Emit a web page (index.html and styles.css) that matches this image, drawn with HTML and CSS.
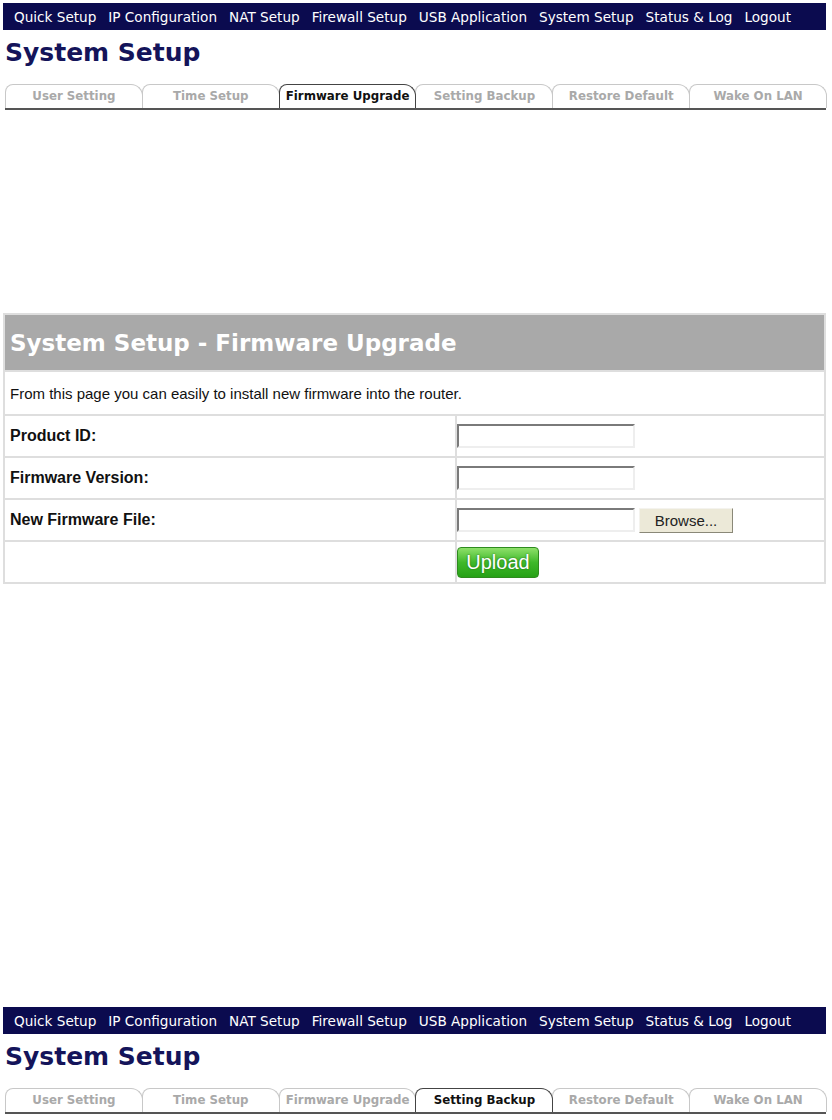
FILE: index.html
```html
<!DOCTYPE html>
<html lang="en">
<head>
    <meta charset="UTF-8">
    <title>System Setup - Firmware Upgrade</title>
    <link rel="stylesheet" href="styles.css">
</head>
<body>
    <div class="shot">
        <nav class="topnav">
            <a href="#">Quick Setup</a>
            <a href="#">IP Configuration</a>
            <a href="#">NAT Setup</a>
            <a href="#">Firewall Setup</a>
            <a href="#">USB Application</a>
            <a href="#">System Setup</a>
            <a href="#">Status &amp; Log</a>
            <a href="#">Logout</a>
        </nav>
        <h1 class="page-title">System Setup</h1>
        <ul class="tabs">
            <li>User Setting</li>
            <li>Time Setup</li>
            <li class="active">Firmware Upgrade</li>
            <li>Setting Backup</li>
            <li>Restore Default</li>
            <li>Wake On LAN</li>
        </ul>
    </div>

    <table class="panel">
        <tr>
            <th colspan="2" class="panel-head">System Setup - Firmware Upgrade</th>
        </tr>
        <tr>
            <td colspan="2" class="desc">From this page you can easily to install new firmware into the router.</td>
        </tr>
        <tr>
            <td class="label">Product ID:</td>
            <td class="field"><input type="text" class="text-box"></td>
        </tr>
        <tr>
            <td class="label">Firmware Version:</td>
            <td class="field"><input type="text" class="text-box"></td>
        </tr>
        <tr>
            <td class="label">New Firmware File:</td>
            <td class="field"><input type="text" class="text-box"><button class="browse">Browse...</button></td>
        </tr>
        <tr>
            <td class="label"></td>
            <td class="field"><button class="upload">Upload</button></td>
        </tr>
    </table>

    <div class="shot second">
        <nav class="topnav">
            <a href="#">Quick Setup</a>
            <a href="#">IP Configuration</a>
            <a href="#">NAT Setup</a>
            <a href="#">Firewall Setup</a>
            <a href="#">USB Application</a>
            <a href="#">System Setup</a>
            <a href="#">Status &amp; Log</a>
            <a href="#">Logout</a>
        </nav>
        <h1 class="page-title">System Setup</h1>
        <ul class="tabs">
            <li>User Setting</li>
            <li>Time Setup</li>
            <li>Firmware Upgrade</li>
            <li class="active">Setting Backup</li>
            <li>Restore Default</li>
            <li>Wake On LAN</li>
        </ul>
    </div>
</body>
</html>
```

FILE: styles.css
```css
:root {
    --navy: #0b0b4f; --title: #14145a; --tab-line: #c8c8c8; --tab-text: #a9a9a9;
    --grid: #dedede; --head-bg: #a9a9a9;
}
body { margin: 0; padding: 3px 6px 0 3px; background: #fff; font-family: 'DejaVu Sans', Verdana, sans-serif; }
.shot { width: 823px; }
.second { margin-top: 423px; }
.topnav { background: var(--navy); height: 27px; display: flex; align-items: center; gap: 12px; padding-left: 11px; }
.topnav a { color: #fff; text-decoration: none; font-size: 13.6px; }
.page-title { margin: 6px 0 0 2px; font-size: 25px; font-weight: bold; color: var(--title); line-height: 34px; }
.tabs { list-style: none; margin: 14px 0 0 2px; padding: 0; display: flex; border-bottom: 2px solid #555; }
.tabs li { flex: 1; height: 23px; line-height: 23px; text-align: center; font-size: 11.8px; font-weight: bold; color: var(--tab-text);
    border: 1px solid var(--tab-line); border-bottom: none; border-radius: 8px 12px 0 0; margin-right: -1px; }
.tabs li.active { color: #111; border-color: #444; position: relative; z-index: 1; }

.panel { margin-top: 203px; width: 823px; border-collapse: separate; border-spacing: 2px; background: var(--grid); font-family: 'Liberation Sans', Arial, sans-serif; }
.panel td { background: #fff; height: 40px; padding: 0; }
.panel-head { background: var(--head-bg); color: #fff; text-align: left; height: 55px; padding: 0 0 0 5px; font-family: 'DejaVu Sans', Verdana, sans-serif; font-size: 23px; font-weight: bold; }
.panel .desc { height: 42px; padding-left: 5px; font-size: 15px; color: #111; }
.panel .label { width: 445px; padding-left: 5px; font-size: 16px; font-weight: bold; color: #111; }
.panel .field { padding-left: 0; }
.text-box { width: 172px; height: 18px; border: 2px solid; border-color: #7a7a7a #eee #eee #7a7a7a; padding: 1px; margin: 0; vertical-align: middle; }
.browse { width: 94px; height: 25px; margin-left: 4px; background: #ece9d8; border: 1px solid; border-color: #f4f3ee #8a8878 #8a8878 #f4f3ee; font-family: 'Liberation Sans', Arial, sans-serif; font-size: 15px; color: #222; vertical-align: middle; }
.upload { width: 82px; height: 31px; border: 1px solid #2e8b1e; border-radius: 4px; background: linear-gradient(#8ee06a, #3fb82a 50%, #26a116); color: #fff; font-family: 'Liberation Sans', Arial, sans-serif; font-size: 20px; text-shadow: 0 0 2px #1c6a10; vertical-align: middle; padding: 0; }
```
